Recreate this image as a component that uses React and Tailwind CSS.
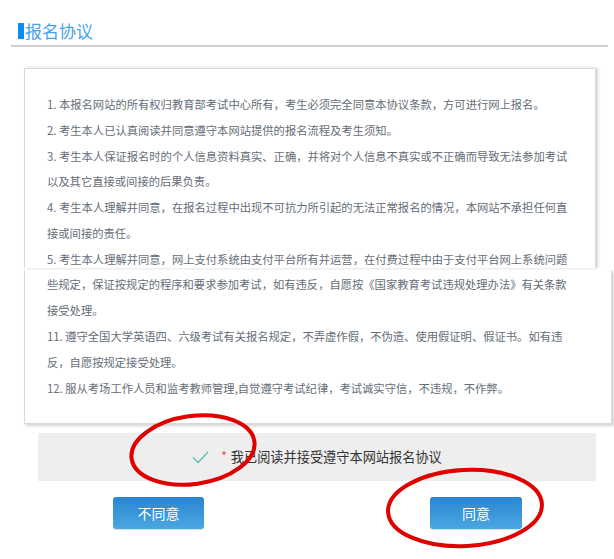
import React from "react";

const upperLines = [
  "1. 本报名网站的所有权归教育部考试中心所有，考生必须完全同意本协议条款，方可进行网上报名。",
  "2. 考生本人已认真阅读并同意遵守本网站提供的报名流程及考生须知。",
  "3. 考生本人保证报名时的个人信息资料真实、正确，并将对个人信息不真实或不正确而导致无法参加考试",
  "以及其它直接或间接的后果负责。",
  "4. 考生本人理解并同意，在报名过程中出现不可抗力所引起的无法正常报名的情况，本网站不承担任何直",
  "接或间接的责任。",
  "5. 考生本人理解并同意，网上支付系统由支付平台所有并运营，在付费过程中由于支付平台网上系统问题",
];

const lowerLines = [
  "些规定，保证按规定的程序和要求参加考试，如有违反，自愿按《国家教育考试违规处理办法》有关条款",
  "接受处理。",
  "11. 遵守全国大学英语四、六级考试有关报名规定，不弄虚作假，不伪造、使用假证明、假证书。如有违",
  "反，自愿按规定接受处理。",
  "12. 服从考场工作人员和监考教师管理,自觉遵守考试纪律，考试诚实守信，不违规，不作弊。",
];

const font = { fontFamily: '"Noto Sans CJK SC", "Noto Sans", sans-serif' };

export default function App() {
  return (
    <div className="relative w-[614px] h-[559px] bg-white overflow-hidden" style={font}>
      {/* Header */}
      <div className="ml-[11px] w-[597px] pt-[20px] pb-[3px] border-b-2 border-[#cfcfcf] pl-[7px]">
        <div className="flex items-center h-[22px]">
          <span className="w-[6px] h-[16px] bg-[#0c8cf0]" />
          <span className="ml-[1px] text-[17px] leading-[22px] text-[#46a3ea]">报名协议</span>
        </div>
      </div>

      {/* Agreement box (two stitched pieces) */}
      <div className="mt-[21px] ml-[24px] w-[572px] h-[200px] overflow-hidden border-x border-t border-[#d9d9d9] bg-white pt-[23px] pl-[22px] shadow-[2px_0_3px_rgba(0,0,0,0.18)]">
        {upperLines.map((l, i) => (
          <div key={i} className="whitespace-nowrap text-[11.3px] leading-[25.8px] text-[#646d77]">
            {l}
          </div>
        ))}
      </div>
      <div className="mt-[2px] ml-[24px] w-[588px] border-x border-b border-[#d9d9d9] bg-white pt-[1px] pb-[22px] pl-[22px] shadow-[2px_2px_3px_rgba(0,0,0,0.18)]">
        {lowerLines.map((l, i) => (
          <div key={i} className="whitespace-nowrap text-[11.3px] leading-[26px] text-[#646d77]">
            {l}
          </div>
        ))}
      </div>

      {/* Accept strip */}
      <div className="mt-[9px] ml-[38px] w-[558px] h-[48px] bg-[#eeeeee] flex items-center justify-center">
        <svg width="17" height="13" viewBox="0 0 17 13" className="mr-[12px]">
          <polyline points="1,6.5 6,11.5 16,1" fill="none" stroke="#5cbdb6" strokeWidth="1.3" />
        </svg>
        <span className="text-[#e84a4a] text-[12px] leading-none mr-[4px] -mt-[2px]">*</span>
        <span className="text-[13.2px] text-[#333]">我已阅读并接受遵守本网站报名协议</span>
      </div>

      {/* Buttons */}
      <div className="mt-[16px] flex">
        <button className="ml-[113px] w-[91px] h-[32px] rounded-[3px] bg-gradient-to-b from-[#2985d1] to-[#4ba7e1] text-white text-[14px] shadow-[0_1px_1px_rgba(0,0,0,0.15)]">
          不同意
        </button>
        <button className="ml-[226px] w-[92px] h-[32px] rounded-[3px] bg-gradient-to-b from-[#2985d1] to-[#4ba7e1] text-white text-[14px] shadow-[0_1px_1px_rgba(0,0,0,0.15)]">
          同意
        </button>
      </div>

      {/* Red annotation circles */}
      <svg className="absolute left-0 top-0 pointer-events-none" width="614" height="559">
        <ellipse cx="193" cy="450" rx="62" ry="34" transform="rotate(-8 193 450)" fill="none" stroke="#e00000" strokeWidth="4" />
        <ellipse cx="465" cy="508" rx="77" ry="38" transform="rotate(-3 465 508)" fill="none" stroke="#e00000" strokeWidth="4" />
      </svg>
    </div>
  );
}
